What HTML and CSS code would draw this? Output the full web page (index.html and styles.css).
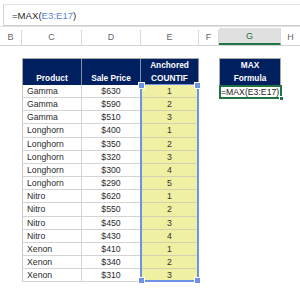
FILE: index.html
```html
<!DOCTYPE html>
<html>
<head>
<meta charset="utf-8">
<link rel="stylesheet" href="styles.css">
</head>
<body>
<div class="fbar"><span class="ftext">=MAX(<span class="ref">E3:E17</span>)</span></div>
<div class="colhdr">
  <div class="ch w-b">B</div>
  <div class="ch w-c">C</div>
  <div class="ch w-d">D</div>
  <div class="ch w-e">E</div>
  <div class="ch w-f">F</div>
  <div class="ch w-g sel">G</div>
  <div class="ch w-h">H</div>
</div>
<div class="gap"></div>
<div class="sheet">
  <div class="blank"></div>
  <div class="hd first">Product</div>
  <div class="hd">Sale Price</div>
  <div class="hd">Anchored<br>COUNTIF</div>
  <div class="blank"></div>
  <div class="hd solo">MAX<br>Formula</div>
  <div class="blank"></div>

  <div class="blank"></div><div class="c first">Gamma</div><div class="c num">$630</div><div class="c y">1</div><div class="blank"></div><div class="active">=MAX(E3:E17)</div><div class="blank"></div>
  <div class="blank"></div><div class="c first">Gamma</div><div class="c num">$590</div><div class="c y">2</div><div class="blank"></div><div class="blank"></div><div class="blank"></div>
  <div class="blank"></div><div class="c first">Gamma</div><div class="c num">$510</div><div class="c y">3</div><div class="blank"></div><div class="blank"></div><div class="blank"></div>
  <div class="blank"></div><div class="c first">Longhorn</div><div class="c num">$400</div><div class="c y">1</div><div class="blank"></div><div class="blank"></div><div class="blank"></div>
  <div class="blank"></div><div class="c first">Longhorn</div><div class="c num">$350</div><div class="c y">2</div><div class="blank"></div><div class="blank"></div><div class="blank"></div>
  <div class="blank"></div><div class="c first">Longhorn</div><div class="c num">$320</div><div class="c y">3</div><div class="blank"></div><div class="blank"></div><div class="blank"></div>
  <div class="blank"></div><div class="c first">Longhorn</div><div class="c num">$300</div><div class="c y">4</div><div class="blank"></div><div class="blank"></div><div class="blank"></div>
  <div class="blank"></div><div class="c first">Longhorn</div><div class="c num">$290</div><div class="c y">5</div><div class="blank"></div><div class="blank"></div><div class="blank"></div>
  <div class="blank"></div><div class="c first">Nitro</div><div class="c num">$620</div><div class="c y">1</div><div class="blank"></div><div class="blank"></div><div class="blank"></div>
  <div class="blank"></div><div class="c first">Nitro</div><div class="c num">$550</div><div class="c y">2</div><div class="blank"></div><div class="blank"></div><div class="blank"></div>
  <div class="blank"></div><div class="c first">Nitro</div><div class="c num">$450</div><div class="c y">3</div><div class="blank"></div><div class="blank"></div><div class="blank"></div>
  <div class="blank"></div><div class="c first">Nitro</div><div class="c num">$430</div><div class="c y">4</div><div class="blank"></div><div class="blank"></div><div class="blank"></div>
  <div class="blank"></div><div class="c first">Xenon</div><div class="c num">$410</div><div class="c y">1</div><div class="blank"></div><div class="blank"></div><div class="blank"></div>
  <div class="blank"></div><div class="c first">Xenon</div><div class="c num">$340</div><div class="c y">2</div><div class="blank"></div><div class="blank"></div><div class="blank"></div>
  <div class="blank"></div><div class="c first">Xenon</div><div class="c num">$310</div><div class="c y">3</div><div class="blank"></div><div class="blank"></div><div class="blank"></div>

  <div class="range">
    <span class="h tl"></span><span class="h tr"></span><span class="h bl"></span><span class="h br"></span>
  </div>
  <div class="ring"><span class="h fill"></span></div>
</div>
</body>
</html>
```

FILE: styles.css
```css
html, body {
  margin: 0;
  padding: 0;
  background: #ffffff;
  width: 300px;
  height: 300px;
  overflow: hidden;
  font-family: "Liberation Sans", Arial, sans-serif;
}

.fbar {
  box-sizing: border-box;
  height: 26px;
  padding-top: 4px;
  padding-left: 3px;
  display: flex;
}

.ftext {
  box-sizing: border-box;
  flex: 1;
  height: 22px;
  border-left: 1px solid #d6d6d6;
  border-top: 1px solid #e2e2e2;
  border-bottom: 1px solid #d0d0d0;
  padding-left: 8px;
  font-size: 9.6px;
  line-height: 21px;
  color: #2b2b2b;
}

.ref { color: #5a86d6; }

.colhdr {
  display: flex;
  height: 20px;
  box-sizing: border-box;
  border-top: 1px solid #e0e0e0;
  border-bottom: 1px solid #d4d4d4;
}

.ch {
  box-sizing: border-box;
  font-size: 9px;
  color: #666;
  text-align: center;
  line-height: 18px;
  border-right: 1px solid #dadada;
  margin: 3px 0 0 0;
  line-height: 15px;
}

.ch.sel {
  margin-top: 1px;
  line-height: 16px;
  background: #e0e0e0;
  color: #217346;
  border-bottom: 2px solid #217346;
}

.w-b { width: 22px; }
.w-c { width: 60px; }
.w-d { width: 59px; }
.w-e { width: 58px; }
.w-f { width: 20px; }
.w-g { width: 62px; }
.w-h { flex: 1; border-right: none; }

.gap { height: 12px; }

.sheet {
  position: relative;
  display: grid;
  grid-template-columns: 22px 60px 59px 58px 20px 62px 1fr;
  grid-template-rows: 27px repeat(15, 13.17px);
  font-size: 8.7px;
  color: #2a2a2a;
}

.blank { }

.hd {
  box-sizing: border-box;
  background: #002060;
  color: #ffffff;
  font-weight: bold;
  font-size: 8.3px;
  line-height: 13px;
  text-align: center;
  display: flex;
  align-items: flex-end;
  justify-content: center;
  padding-bottom: 0px;
  border-top: 1px solid #a8a8a8;
  border-right: 1px solid #8a8fa8;
}

.hd.first { border-left: 1px solid #a8a8a8; }
.hd.solo { border-left: 1px solid #a8a8a8; border-right: 1px solid #a8a8a8; }

.c {
  box-sizing: border-box;
  border-right: 1px solid #d4d4d4;
  border-bottom: 1px solid #d4d4d4;
  line-height: 12px;
  white-space: nowrap;
  overflow: hidden;
}

.c.first {
  border-left: 1px solid #c8c8c8;
  padding-left: 4px;
}

.c.num { text-align: center; }

.c.y {
  background: #f0f0a2;
  text-align: center;
  border-bottom-color: #d2d2b0;
  color: #333;
}

.active {
  box-sizing: border-box;
  border: 2px solid #217346;
  font-size: 8.7px;
  line-height: 10px;
  padding-left: 0px;
  white-space: nowrap;
  color: #222;
  margin-right: -1px;
  height: 14px;
}

.range {
  position: absolute;
  left: 140px;
  top: 26px;
  width: 59px;
  height: 198px;
  box-sizing: border-box;
  border: 2px solid #6e92e8;
  border-top-width: 1px;
  pointer-events: none;
}

.h {
  position: absolute;
  width: 5px;
  height: 5px;
  background: #6e92e8;
  border: 1px solid #ffffff;
  box-sizing: content-box;
}

.tl { left: -4px; top: -3px; }
.tr { right: -4px; top: -3px; }
.bl { left: -4px; bottom: -4px; }
.br { right: -4px; bottom: -4px; }

.ring {
  position: absolute;
  left: 219px;
  top: 27px;
  width: 63px;
  height: 14px;
  pointer-events: none;
}

.fill {
  background: #217346;
  width: 3px;
  height: 3px;
  right: -2px;
  bottom: -2px;
}
```
